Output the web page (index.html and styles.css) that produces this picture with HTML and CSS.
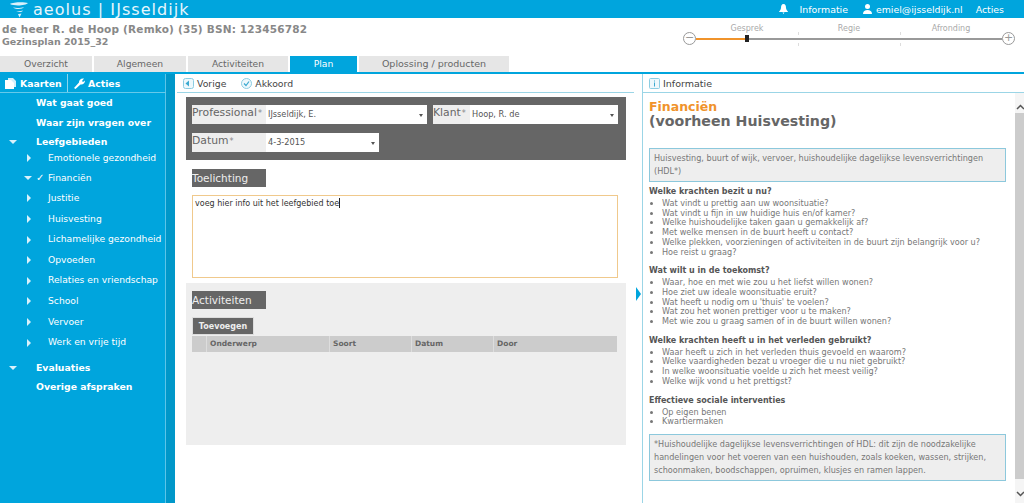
FILE: index.html
```html
<!DOCTYPE html>
<html lang="nl">
<head>
<meta charset="UTF-8">
<title>Aeolus - Gezinsplan</title>
<link rel="stylesheet" href="styles.css">
</head>
<body>
<header class="topbar">
  <div class="brand">
    <svg class="brand-icon" width="18" height="17" viewBox="0 0 18 16"><path d="M0 2.500C3 .5 14 .2 18 1.500 16 4 5 5 0 2.500zM3 6c3 .8 8 .6 11-.5-1 2-7 3-11 .5zM6 9.500c2 .5 5 .2 7-.6-1 1.600-4 2.400-7 .6zM8 12.500c1 .2 2.500 0 3.500-.4L9.500 16z" fill="#d9f1fb"/></svg>
    <span>aeolus | IJsseldijk</span>
  </div>
  <nav class="topnav">
    <svg width="9" height="10" viewBox="0 0 9 10"><path d="M4.500 0C6.500 0 7 2 7 4c0 2 2 3 2 4H0c0-1 2-2 2-4 0-2 .5-4 2.500-4zM3.500 8.500h2L4.500 10z" fill="#fff"/></svg>
    <span class="topnav-info">Informatie</span>
    <svg class="user-icon" width="9" height="10" viewBox="0 0 9 10"><circle cx="4.500" cy="2.500" r="2.500" fill="#fff"/><path d="M0 10c0-3 2-4 4.500-4S9 7 9 10z" fill="#fff"/></svg>
    <span class="topnav-mail">emiel@ijsseldijk.nl</span>
    <span>Acties</span>
  </nav>
</header>

<section class="client">
  <div>
    <h1>de heer R. de Hoop (Remko) (35) BSN: 123456782</h1>
    <h2>Gezinsplan 2015_32</h2>
  </div>
  <div class="stages">
    <div class="stage-names"><span>Gesprek</span><span>Regie</span><span>Afronding</span></div>
    <div class="stage-track">
      <span class="stage-btn">&minus;</span>
      <div class="track">
        <div class="track-done"></div>
        <div class="track-thumb"></div>
        <i class="tick tick-1"></i>
        <i class="tick tick-2"></i>
      </div>
      <span class="stage-btn">+</span>
    </div>
  </div>
</section>

<nav class="tabs">
  <a class="tab tab-1">Overzicht</a>
  <a class="tab tab-2">Algemeen</a>
  <a class="tab tab-3">Activiteiten</a>
  <a class="tab tab-4 active">Plan</a>
  <a class="tab tab-5">Oplossing / producten</a>
</nav>

<div class="main">
  <aside class="sidebar">
    <div class="side-tools">
      <span class="side-tool side-tool-first">
        <svg width="12" height="11" viewBox="0 0 12 11"><path d="M3 0h5l3 3v6H3z" fill="#d5effa"/><path d="M0 2h6l3 3v6H0z" fill="#fff"/></svg>
        Kaarten
      </span>
      <span class="side-tool">
        <svg width="11" height="11" viewBox="0 0 11 11"><path d="M0 10l5-5.500C4.800 2 7 0 10 .5L8 3l1 1 2-1.500C11 5.500 8.500 7 6.500 6.500L1.500 11z" fill="#fff"/></svg>
        Acties
      </span>
    </div>
    <ul class="side-menu">
      <li class="item-top">Wat gaat goed</li>
      <li class="item-top">Waar zijn vragen over</li>
      <li class="item-top"><i class="arrow-down arrow-top"></i>Leefgebieden</li>
      <li class="item-sub item-first"><i class="arrow-right"></i>Emotionele gezondheid</li>
      <li class="item-sub"><i class="arrow-down arrow-sub"></i><span class="check">&#10003;</span>Financiën</li>
      <li class="item-sub"><i class="arrow-right"></i>Justitie</li>
      <li class="item-sub"><i class="arrow-right"></i>Huisvesting</li>
      <li class="item-sub"><i class="arrow-right"></i>Lichamelijke gezondheid</li>
      <li class="item-sub"><i class="arrow-right"></i>Opvoeden</li>
      <li class="item-sub"><i class="arrow-right"></i>Relaties en vriendschap</li>
      <li class="item-sub"><i class="arrow-right"></i>School</li>
      <li class="item-sub"><i class="arrow-right"></i>Vervoer</li>
      <li class="item-sub"><i class="arrow-right"></i>Werk en vrije tijd</li>
      <li class="item-top item-evaluaties"><i class="arrow-down arrow-top"></i>Evaluaties</li>
      <li class="item-top">Overige afspraken</li>
    </ul>
  </aside>

  <main class="content">
    <div class="toolbar">
      <span class="tool">
        <svg width="11" height="11" viewBox="0 0 11 11"><rect x=".5" y=".5" width="10" height="10" rx="2" fill="#eef8fc" stroke="#8ccde2"/><path d="M6 2.500v6L2.500 5.500z" fill="#3aa9d0"/></svg>
        Vorige
      </span>
      <span class="tool">
        <svg width="11" height="11" viewBox="0 0 11 11"><circle cx="5.500" cy="5.500" r="5" fill="#eef8fc" stroke="#8ccde2"/><path d="M3 5.500l2 2 3-4" fill="none" stroke="#3aa9d0" stroke-width="1.200"/></svg>
        Akkoord
      </span>
    </div>

    <form class="form-box">
      <div class="form-row">
        <label class="field-label label-wide">Professional<em>*</em></label>
        <div class="select select-prof">IJsseldijk, E.</div>
        <label class="field-label label-klant">Klant<em>*</em></label>
        <div class="select select-klant">Hoop, R. de</div>
      </div>
      <div class="form-row">
        <label class="field-label label-wide">Datum<em>*</em></label>
        <div class="select select-datum">4-3-2015</div>
      </div>
    </form>

    <div class="note">
      <h3 class="section-title">Toelichting</h3>
      <div class="textarea">voeg hier info uit het leefgebied toe<i class="caret"></i></div>
    </div>

    <section class="activities">
      <h3 class="section-title">Activiteiten</h3>
      <button class="add-btn" type="button">Toevoegen</button>
      <div class="table-head">
        <span class="col col-empty"></span>
        <span class="col col-subject">Onderwerp</span>
        <span class="col col-kind">Soort</span>
        <span class="col col-date">Datum</span>
        <span class="col">Door</span>
      </div>
    </section>
    <i class="collapse-handle"></i>
  </main>

  <aside class="info">
    <div class="toolbar info-toolbar">
      <span class="tool">
        <svg width="11" height="11" viewBox="0 0 11 11"><rect x=".5" y=".5" width="10" height="10" rx="1" fill="#eef8fc" stroke="#8ccde2"/><path d="M5.500 2.500v1M5.500 4.500v4" stroke="#3aa9d0"/></svg>
        Informatie
      </span>
    </div>
    <div class="info-body">
      <div class="info-text">
        <h2 class="info-title"><span>Financiën</span>(voorheen Huisvesting)</h2>
        <p class="info-box">Huisvesting, buurt of wijk, vervoer, huishoudelijke dagelijkse levensverrichtingen (HDL*)</p>

        <h4>Welke krachten bezit u nu?</h4>
        <ul>
          <li>Wat vindt u prettig aan uw woonsituatie?</li>
          <li>Wat vindt u fijn in uw huidige huis en/of kamer?</li>
          <li>Welke huishoudelijke taken gaan u gemakkelijk af?</li>
          <li>Met welke mensen in de buurt heeft u contact?</li>
          <li>Welke plekken, voorzieningen of activiteiten in de buurt zijn belangrijk voor u?</li>
          <li>Hoe reist u graag?</li>
        </ul>

        <h4>Wat wilt u in de toekomst?</h4>
        <ul>
          <li>Waar, hoe en met wie zou u het liefst willen wonen?</li>
          <li>Hoe ziet uw ideale woonsituatie eruit?</li>
          <li>Wat heeft u nodig om u 'thuis' te voelen?</li>
          <li>Wat zou het wonen prettiger voor u te maken?</li>
          <li>Met wie zou u graag samen of in de buurt willen wonen?</li>
        </ul>

        <h4>Welke krachten heeft u in het verleden gebruikt?</h4>
        <ul>
          <li>Waar heeft u zich in het verleden thuis gevoeld en waarom?</li>
          <li>Welke vaardigheden bezat u vroeger die u nu niet gebruikt?</li>
          <li>In welke woonsituatie voelde u zich het meest veilig?</li>
          <li>Welke wijk vond u het prettigst?</li>
        </ul>

        <h4>Effectieve sociale interventies</h4>
        <ul>
          <li>Op eigen benen</li>
          <li>Kwartiermaken</li>
        </ul>

        <p class="info-box info-box-foot">*Huishoudelijke dagelijkse levensverrichtingen of HDL: dit zijn de noodzakelijke handelingen voor het voeren van een huishouden, zoals koeken, wassen, strijken, schoonmaken, boodschappen, opruimen, klusjes en ramen lappen.</p>
      </div>
      <div class="scrollbar">
        <svg width="9" height="6" viewBox="0 0 9 6"><path d="M1 5l3.500-3.500L8 5" fill="none" stroke="#555" stroke-width="1.500"/></svg>
        <div class="scroll-thumb"></div>
        <svg width="9" height="6" viewBox="0 0 9 6"><path d="M1 1l3.500 3.500L8 1" fill="none" stroke="#555" stroke-width="1.500"/></svg>
      </div>
    </div>
  </aside>
</div>
</body>
</html>
```

FILE: styles.css
```css
* { box-sizing: border-box; }
html, body { height: 100%; }
body { margin: 0; height: 503px; overflow: hidden; display: flex; flex-direction: column; font-family: "DejaVu Sans", Verdana, sans-serif; font-size: 9px; color: #666; background: #fff; }

/* top bar */
.topbar { height: 18px; flex: none; background: #00a5dd; color: #e6f6fc; display: flex; justify-content: space-between; align-items: center; }
.brand { display: flex; align-items: center; margin-left: 10px; font-size: 16px; letter-spacing: 1.050px; }
.brand-icon { margin-right: 5px; }
.topnav { display: flex; align-items: center; font-size: 9.400px; color: #fff; margin-right: 20px; }
.topnav-info { margin-left: 12px; }
.user-icon { margin-left: 15px; }
.topnav-mail { margin-left: 4px; margin-right: 13px; }

/* client row */
.client { height: 38px; flex: none; display: flex; justify-content: space-between; padding-left: 2px; }
.client h1 { margin: 5px 0 0; font-size: 10.500px; line-height: 13px; color: #888; letter-spacing: .19px; }
.client h2 { margin: 0; font-size: 9.500px; line-height: 11px; color: #888; }
.stages { width: 341px; padding-top: 6px; color: #aaa; font-size: 8px; }
.stage-names { display: flex; margin-left: 13px; width: 306px; text-align: center; line-height: 10px; }
.stage-names span { flex: 1; }
.stage-track { display: flex; align-items: center; margin-top: -2px; }
.stage-btn { width: 13px; height: 13px; border: 1px solid #999; border-radius: 50%; font-size: 11px; line-height: 10px; text-align: center; color: #999; flex: none; }
.track { position: relative; width: 306px; height: 2px; background: #999; }
.track-done { width: 51px; height: 2px; background: #f0932b; }
.track-thumb { position: absolute; left: 49px; top: -3px; width: 4px; height: 7px; background: #222; }
.tick { position: absolute; top: -6px; width: 1px; height: 14px; background: linear-gradient(#ddd 3px, transparent 3px, transparent 11px, #ddd 11px); }
.tick-1 { left: 102px; }
.tick-2 { left: 204px; }

/* tabs */
.tabs { height: 18px; flex: none; display: flex; border-bottom: 2px solid #00a5dd; }
.tab { background: #e6e6e6; color: #666; text-align: center; font-size: 9.200px; line-height: 16px; margin-right: 2px; }
.tab-1 { width: 92px; }
.tab-2 { width: 92px; }
.tab-3 { width: 100px; }
.tab-4 { width: 67px; }
.tab-5 { width: 150px; font-size: 9.500px; }
.tab.active { background: #00a5dd; color: #fff; }

.main { flex: 1; display: flex; min-height: 0; }

/* sidebar */
.sidebar { width: 175px; flex: none; padding-right: 9px; color: #fff; background: linear-gradient(to right, #00a5dd 165px, #5cc4e8 165px, #5cc4e8 166px, #0097c9 166px); }
.side-tools { height: 19px; display: flex; align-items: center; border-bottom: 1px solid #66c9ea; font-weight: bold; font-size: 9.300px; }
.side-tool { display: flex; align-items: center; gap: 3px; height: 100%; padding-left: 6px; }
.side-tool-first { width: 68px; border-right: 1px solid #8ad6ef; padding-left: 5px; }
.side-menu { list-style: none; margin: 0; padding: 0; }
.item-top { position: relative; padding-left: 36px; font-weight: bold; font-size: 9.300px; line-height: 19.500px; }
.item-sub { position: relative; padding-left: 48px; font-size: 9.200px; line-height: 20.600px; }
.item-first { line-height: 11px; padding-bottom: 5px; }
.item-evaluaties { margin-top: 5px; }
.arrow-down { position: absolute; border-left: 4px solid transparent; border-right: 4px solid transparent; border-top: 4px solid #d9f1fb; }
.arrow-top { left: 9px; top: 8px; }
.arrow-sub { left: 24px; top: 8px; }
.arrow-right { position: absolute; left: 27px; top: 50%; margin-top: -4px; border-top: 4px solid transparent; border-bottom: 4px solid transparent; border-left: 4px solid #d9f1fb; }
.item-first .arrow-right { margin-top: -6px; }
.check { position: absolute; left: 36px; font-size: 10px; font-weight: bold; }

/* middle */
.content { position: relative; width: 467px; flex: none; }
.toolbar { height: 19px; margin: 0 8px 0 2px; padding-left: 6px; display: flex; align-items: center; gap: 15px; border-bottom: 1px solid #9bd5e6; color: #444; font-size: 9.300px; }
.tool { display: flex; align-items: center; gap: 3px; }
.form-box { margin: 4px 16px 0 11px; height: 63px; background: #666; padding: 8px 6px; }
.form-row { display: flex; height: 19px; margin-bottom: 9px; }
.field-label { background: #eee; font-size: 10.800px; line-height: 16px; color: #666; }
.field-label em { font-style: normal; font-size: 8px; color: #888; margin-left: 1px; }
.label-wide { width: 74px; }
.label-klant { width: 37px; margin-left: 6px; }
.select { position: relative; background: #fff; color: #555; font-size: 8.200px; line-height: 19px; padding-left: 2px; }
.select::after { content: ""; position: absolute; right: 4px; top: 9px; border-left: 2.500px solid transparent; border-right: 2.500px solid transparent; border-top: 3px solid #555; }
.select-prof { width: 161px; }
.select-klant { width: 148px; }
.select-datum { width: 113px; }
.section-title { margin: 0; width: 74px; height: 18px; background: #666; color: #eee; font-size: 10.500px; font-weight: normal; line-height: 18px; }
.note { margin: 9px 0 0 17px; }
.textarea { width: 426px; height: 83px; margin-top: 8px; border: 1px solid #f0c98c; padding: 2px; color: #333; font-size: 8px; line-height: 11px; }
.caret { display: inline-block; width: 1px; height: 10px; background: #222; vertical-align: -2px; }
.activities { margin: 5px 16px 0 11px; height: 162px; background: #eee; padding: 8px 6px; }
.add-btn { display: block; margin: 8px 0 1px; width: 62px; height: 18px; padding: 0; border: 1px solid #ddd; background: #666; color: #eee; font-family: "DejaVu Sans", Verdana, sans-serif; font-size: 8px; font-weight: bold; }
.table-head { display: flex; width: 425px; height: 16px; background: #ccc; font-weight: bold; font-size: 7.500px; line-height: 16px; color: #666; }
.col { padding-left: 3px; border-left: 1px solid #ddd; }
.col-empty { width: 14px; padding: 0; border: 0; }
.col-subject { width: 123px; }
.col-kind { width: 82px; }
.col-date { width: 82px; }
.collapse-handle { position: absolute; right: 1px; top: 213px; border-top: 7px solid transparent; border-bottom: 7px solid transparent; border-left: 5px solid #00a5dd; }

/* info panel */
.info { flex: 1; min-width: 0; border-left: 1px solid #9bd5e6; }
.info-toolbar { margin: 0; padding-left: 6px; font-size: 9.500px; }
.info-body { display: flex; height: 410px; }
.info-text { width: 369px; flex: none; padding: 7px 6px 0 6px; color: #777; font-size: 8.100px; }
.info-title { margin: 0 0 20px; font-size: 14.200px; line-height: 14px; color: #666; }
.info-title span { display: block; color: #f0932b; font-size: 12.500px; }
.info-box { margin: 0; padding: 3px 4px; background: #eee; border: 1px solid #8cc8dc; line-height: 13px; }
.info-text h4 { margin: 6px 0 0; color: #555; font-size: 8px; line-height: 12px; }
.info-box + h4 { margin-top: 4px; }
.info-text ul { margin: 1px 0 8px; padding-left: 13px; line-height: 9.700px; }
.info-box-foot { margin-top: -1px; line-height: 13px; }
.scrollbar { width: 10px; margin-left: 3px; display: flex; flex-direction: column; align-items: center; padding-top: 11px; background: #f5f5f5; }
.scroll-thumb { width: 10px; height: 366px; margin: 3px 0 12px; background: #ccc; }
```
